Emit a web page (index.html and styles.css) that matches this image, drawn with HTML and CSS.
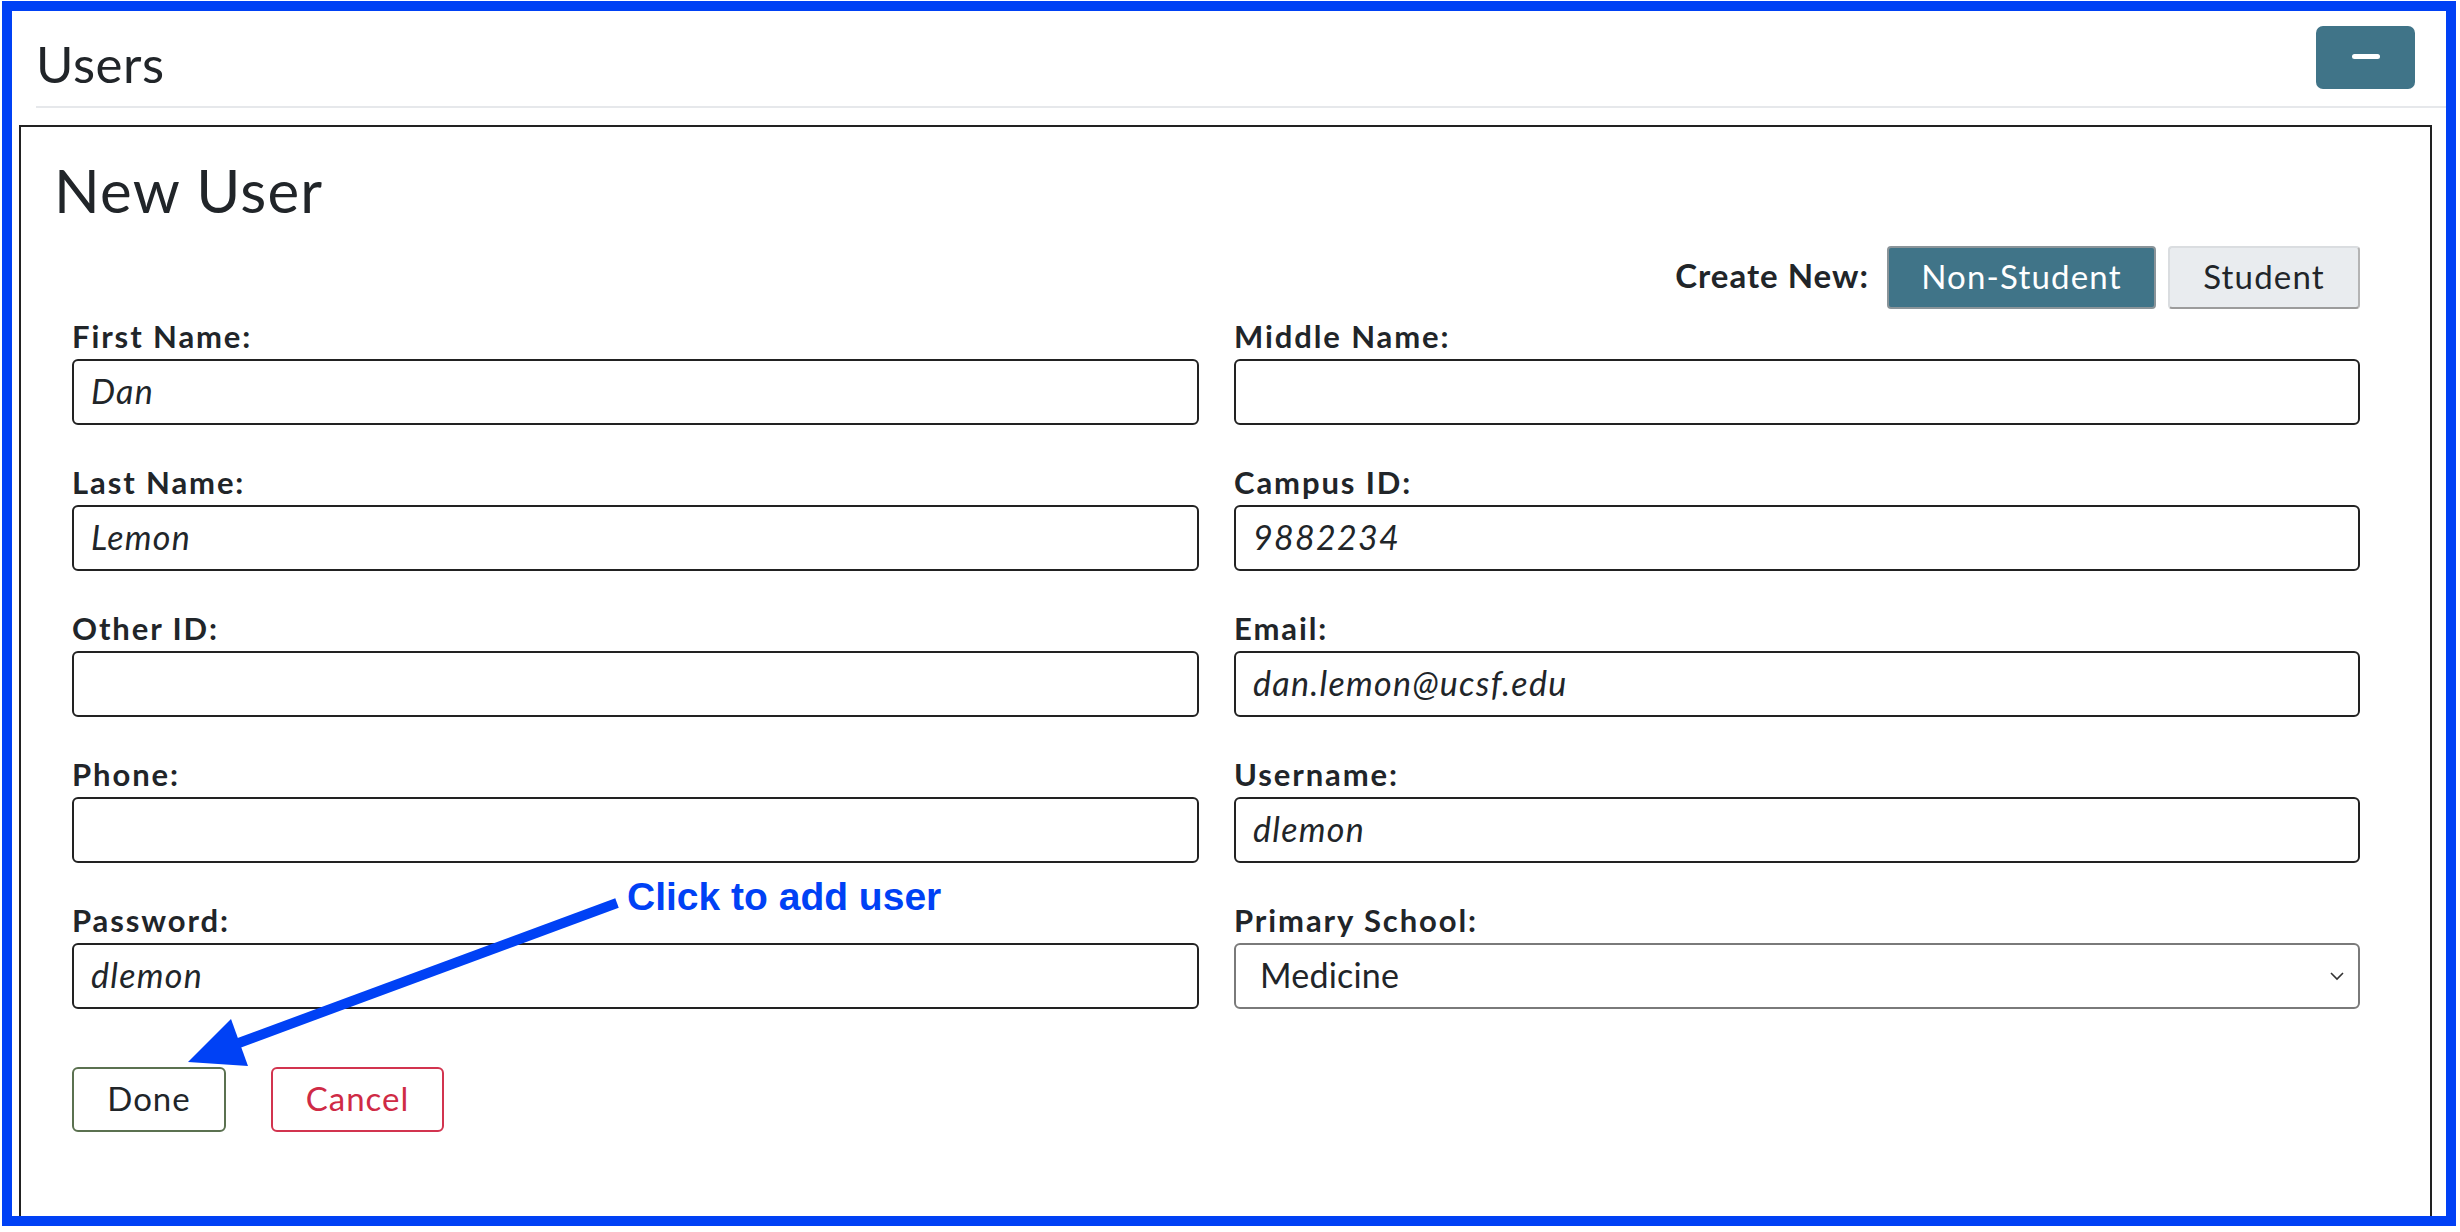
FILE: index.html
```html
<!DOCTYPE html>
<html>
<head>
<meta charset="utf-8">
<link rel="stylesheet" href="styles.css">
</head>
<body>
<div class="frame">
  <div class="panel-head">
    <h2 class="panel-title">Users</h2>
    <button class="btn-collapse"><span class="dash"></span></button>
  </div>
  <div class="card">
    <h1 class="card-title">New User</h1>
    <div class="form-area">
      <div class="create-row">
        <span class="create-label">Create New:</span>
        <button class="seg seg-active">Non-Student</button>
        <button class="seg">Student</button>
      </div>
      <div class="fields">
        <div class="field"><label>First Name:</label><div class="input">Dan</div></div>
        <div class="field"><label>Middle Name:</label><div class="input"></div></div>
        <div class="field"><label>Last Name:</label><div class="input">Lemon</div></div>
        <div class="field"><label>Campus ID:</label><div class="input">9882234</div></div>
        <div class="field"><label>Other ID:</label><div class="input"></div></div>
        <div class="field"><label>Email:</label><div class="input">dan.lemon@ucsf.edu</div></div>
        <div class="field"><label>Phone:</label><div class="input"></div></div>
        <div class="field"><label>Username:</label><div class="input">dlemon</div></div>
        <div class="field"><label>Password:</label><div class="input">dlemon</div></div>
        <div class="field"><label>Primary School:</label>
          <div class="select">Medicine
            <svg class="chev" width="14" height="10" viewBox="0 0 14 10"><path d="M1 2 L7 8 L13 2" fill="none" stroke="#333" stroke-width="1.6"/></svg>
          </div>
        </div>
      </div>
      <div class="actions">
        <button class="btn btn-done">Done</button>
        <button class="btn btn-cancel">Cancel</button>
      </div>
    </div>
  </div>
</div>
<div class="note">Click to add user</div>
<svg class="arrow" width="2460" height="1232" viewBox="0 0 2460 1232">
  <line x1="617" y1="903" x2="236" y2="1044" stroke="#0041f5" stroke-width="10"/>
  <polygon points="188,1062 231,1019 248,1066" fill="#0041f5"/>
</svg>
</body>
</html>
```
FILE: styles.css
```css
html, body {
  margin: 0;
  padding: 0;
  background: #fff;
}
body {
  font-family: Lato, "Noto Sans", sans-serif;
  color: #212529;
  width: 2460px;
  height: 1232px;
  overflow: hidden;
  position: relative;
}
.frame {
  box-sizing: border-box;
  width: 2454px;
  height: 1225px;
  margin: 1px 0 0 2px;
  border: 10px solid #0041f5;
  overflow: hidden;
  background: #fff;
}
.panel-head {
  display: flex;
  justify-content: space-between;
  align-items: flex-start;
  margin-left: 24px;
  height: 95px;
  border-bottom: 2px solid #e6e8eb;
}
.panel-title {
  margin: 23px 0 0 0;
  font-size: 51px;
  line-height: 60px;
  font-weight: 400;
  letter-spacing: 0.6px;
}
.btn-collapse {
  margin: 15px 31px 0 0;
  width: 99px;
  height: 63px;
  background: #407488;
  border: none;
  border-radius: 7px;
  display: flex;
  align-items: center;
  justify-content: center;
  padding: 0;
}
.dash {
  display: block;
  width: 28px;
  height: 5px;
  border-radius: 3px;
  background: #fff;
  margin-top: -3px;
}
.card {
  margin: 17px 14px 0 7px;
  border: 2px solid #222;
  border-bottom: none;
  height: 1200px;
  padding: 28px 0 0 0;
}
.card-title {
  margin: 0 0 0 33px;
  font-size: 60px;
  line-height: 71px;
  font-weight: 400;
  letter-spacing: 1.2px;
}
.form-area {
  margin: 0 70px 0 51px;
}
.create-row {
  display: flex;
  justify-content: flex-end;
  align-items: center;
  margin-top: 20px;
  height: 63px;
}
.create-label {
  font-weight: 700;
  font-size: 33px;
  margin-right: 18px;
  margin-bottom: 5px;
  letter-spacing: 1px;
}
.seg {
  font-family: Lato, "Noto Sans", sans-serif;
  height: 63px;
  font-size: 33px;
  letter-spacing: 1.2px;
  border-radius: 4px;
  padding: 0 0 4px 0;
}
.seg-active {
  width: 269px;
  background: #407488;
  color: #fff;
  border: 2px solid #8a9499;
  margin-right: 12px;
}
.seg:not(.seg-active) {
  width: 192px;
  background: #e9ecef;
  color: #212529;
  border: 2px solid #dadde0;
  border-bottom-color: #9c9c9c;
  border-right-color: #b4b4b4;
}
.fields {
  display: grid;
  grid-template-columns: 1127px 1126px;
  column-gap: 35px;
  row-gap: 41px;
  margin-top: 11px;
}
.field label {
  display: block;
  font-weight: 700;
  font-size: 31px;
  line-height: 33px;
  margin-bottom: 6px;
  letter-spacing: 1.9px;
}
.input, .select {
  box-sizing: border-box;
  height: 66px;
  border: 2px solid #222;
  border-radius: 6px;
  padding: 0 17px 3px 17px;
  display: flex;
  align-items: center;
  font-size: 34px;
  font-style: italic;
  letter-spacing: 1.3px;
}
.select {
  border: 2px solid #7a7a7a;
  font-style: normal;
  letter-spacing: 0.2px;
  padding: 0 14px 3px 24px;
  justify-content: space-between;
}
.chev {
  display: block;
  margin-top: 3px;
}
.actions {
  display: flex;
  gap: 45px;
  margin-top: 58px;
}
.btn {
  font-family: Lato, "Noto Sans", sans-serif;
  height: 65px;
  font-size: 33px;
  letter-spacing: 1px;
  background: #fff;
  border-radius: 6px;
  padding: 0 0 3px 0;
}
.btn-done {
  width: 154px;
  border: 2px solid #5b7150;
  color: #212529;
}
.btn-cancel {
  width: 173px;
  border: 2px solid #d2344f;
  color: #cf2a45;
}
.note {
  position: absolute;
  left: 627px;
  top: 877px;
  font-family: "Liberation Sans", Arial, sans-serif;
  font-weight: 700;
  font-size: 39px;
  line-height: 39px;
  color: #0041f5;
}
.arrow {
  position: absolute;
  left: 0;
  top: 0;
  pointer-events: none;
}
```
